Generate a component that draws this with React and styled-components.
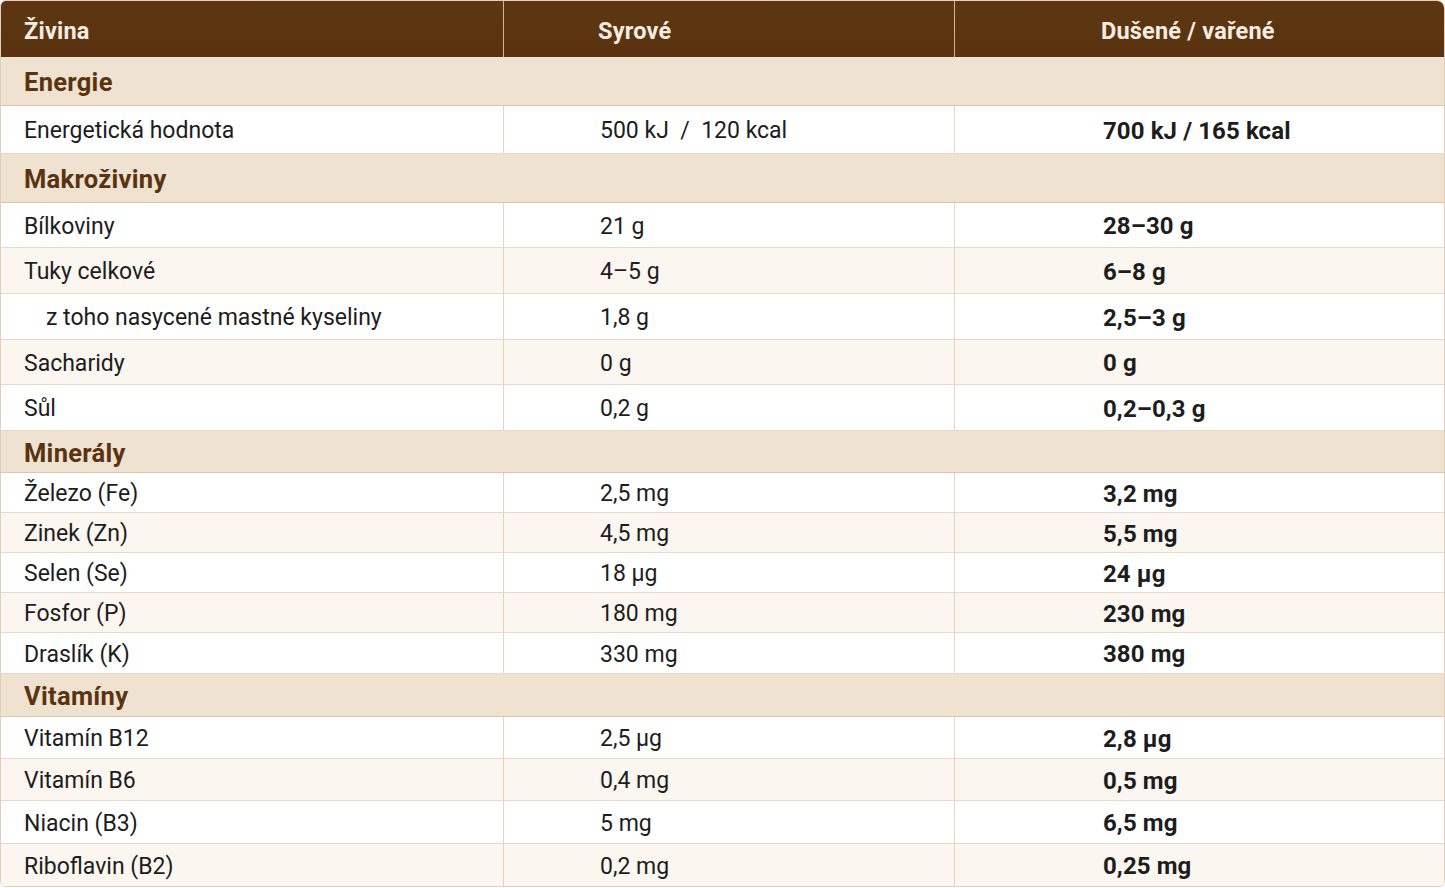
import React from "react";
import styled, { createGlobalStyle } from "styled-components";

const Global = createGlobalStyle`
  html, body { margin: 0; padding: 0; background: #ffffff; }
  body { font-family: Roboto, "Liberation Sans", Arial, sans-serif; }
  * { box-sizing: border-box; }
`;

const Table = styled.div`
  width: 1445px;
  height: 887px;
  border: 1px solid #e2cfbb;
  border-radius: 6px 8px 6px 6px;
  overflow: hidden;
  background: #fff;
`;

const HeadRow = styled.div`
  display: grid;
  grid-template-columns: 502px 451px 1fr;
  height: 56px;
  background: linear-gradient(180deg, #5e3712 0%, #59320f 100%);
`;

const HeadCell = styled.div`
  display: flex;
  align-items: center;
  padding-left: ${(p) => p.$pad}px;
  padding-top: 4px;
  color: #f6ede2;
  font-weight: 700;
  font-size: 23.5px;
  letter-spacing: 0.2px;
  border-left: ${(p) => (p.$first ? "none" : "1.5px solid #d2b594")};
`;

const SectionRow = styled.div`
  display: flex;
  align-items: center;
  height: ${(p) => p.$h}px;
  padding-left: 23px;
  padding-top: 2px;
  background: #f0e2d1;
  border-bottom: 1px solid #dcc6ae;
  color: #5a3310;
  font-weight: 700;
  font-size: 25.5px;
  letter-spacing: 0.3px;
`;

const Row = styled.div`
  display: grid;
  grid-template-columns: 502px 451px 1fr;
  height: ${(p) => p.$h}px;
  background: ${(p) => (p.$alt ? "#fbf6ef" : "#ffffff")};
  border-bottom: ${(p) => (p.$last ? "none" : "1px solid #e8d9c8")};
`;

const Cell = styled.div`
  display: flex;
  align-items: center;
  padding-left: ${(p) => p.$pad}px;
  padding-top: 2px;
  color: #1d1d1d;
  font-size: ${(p) => (p.$bold ? 24 : 23)}px;
  font-weight: ${(p) => (p.$bold ? 700 : 400)};
  letter-spacing: ${(p) => (p.$bold ? 0.1 : 0)}px;
  border-left: ${(p) => (p.$first ? "none" : "1px solid #e4d3c0")};
  white-space: pre;
`;

const data = [
  { section: "Energie", h: 49 },
  { name: "Energetická hodnota", raw: "500 kJ  /  120 kcal", cooked: "700 kJ / 165 kcal", h: 48 },
  { section: "Makroživiny", h: 49 },
  { name: "Bílkoviny", raw: "21 g", cooked: "28–30 g", h: 45 },
  { name: "Tuky celkové", raw: "4–5 g", cooked: "6–8 g", h: 46, alt: true },
  { name: "z toho nasycené mastné kyseliny", raw: "1,8 g", cooked: "2,5–3 g", h: 46, indent: true },
  { name: "Sacharidy", raw: "0 g", cooked: "0 g", h: 45, alt: true },
  { name: "Sůl", raw: "0,2 g", cooked: "0,2–0,3 g", h: 46 },
  { section: "Minerály", h: 42 },
  { name: "Železo (Fe)", raw: "2,5 mg", cooked: "3,2 mg", h: 40 },
  { name: "Zinek (Zn)", raw: "4,5 mg", cooked: "5,5 mg", h: 40, alt: true },
  { name: "Selen (Se)", raw: "18 µg", cooked: "24 µg", h: 40 },
  { name: "Fosfor (P)", raw: "180 mg", cooked: "230 mg", h: 40, alt: true },
  { name: "Draslík (K)", raw: "330 mg", cooked: "380 mg", h: 41 },
  { section: "Vitamíny", h: 43 },
  { name: "Vitamín B12", raw: "2,5 µg", cooked: "2,8 µg", h: 42 },
  { name: "Vitamín B6", raw: "0,4 mg", cooked: "0,5 mg", h: 42, alt: true },
  { name: "Niacin (B3)", raw: "5 mg", cooked: "6,5 mg", h: 43 },
  { name: "Riboflavin (B2)", raw: "0,2 mg", cooked: "0,25 mg", h: 42, alt: true, last: true },
];

export default function App() {
  return (
    <>
      <Global />
      <Table>
        <HeadRow>
          <HeadCell $first $pad={23}>Živina</HeadCell>
          <HeadCell $pad={94}>Syrové</HeadCell>
          <HeadCell $pad={146}>Dušené / vařené</HeadCell>
        </HeadRow>
        {data.map((r, i) =>
          r.section ? (
            <SectionRow key={i} $h={r.h}>{r.section}</SectionRow>
          ) : (
            <Row key={i} $h={r.h} $alt={r.alt} $last={r.last}>
              <Cell $first $pad={r.indent ? 45 : 23}>{r.name}</Cell>
              <Cell $pad={96}>{r.raw}</Cell>
              <Cell $pad={148} $bold>{r.cooked}</Cell>
            </Row>
          )
        )}
      </Table>
    </>
  );
}
